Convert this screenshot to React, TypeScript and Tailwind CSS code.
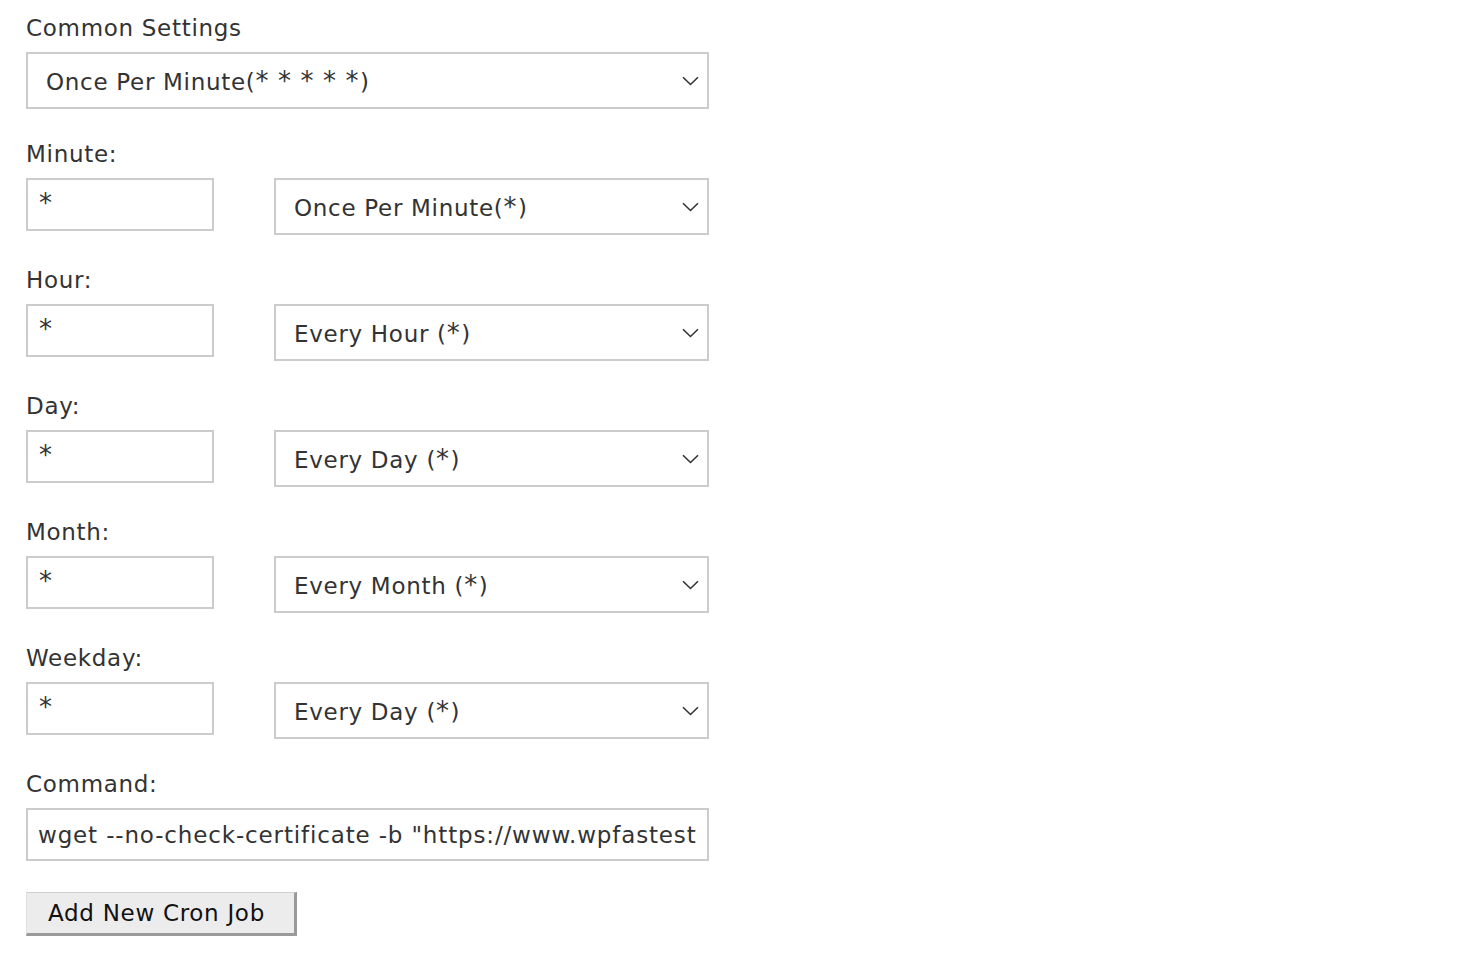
import React from "react";

const font = { fontFamily: '"DejaVu Sans", Verdana, sans-serif' };

function Stars({ text }: { text: string }) {
  const parts = text.split("*");
  return (
    <>
      {parts.map((p, i) => (
        <React.Fragment key={i}>
          {p}
          {i < parts.length - 1 && <span className="text-[26px] leading-none tracking-[1.5px]">*</span>}
        </React.Fragment>
      ))}
    </>
  );
}

function Chevron() {
  return (
    <svg width="17" height="10" viewBox="0 0 17 10" className="shrink-0">
      <path d="M1 1.2 L8.5 8.5 L16 1.2" fill="none" stroke="#333" strokeWidth="1.6" />
    </svg>
  );
}

function FakeSelect({ text, className }: { text: string; className: string }) {
  return (
    <div
      className={`h-[57px] border-2 border-[#cccccc] bg-white flex items-center justify-between pl-[18px] pr-[8px] ${className}`}
    >
      <span className="text-[23px] leading-none text-[#333333] tracking-[0.7px] whitespace-nowrap">
        <Stars text={text} />
      </span>
      <Chevron />
    </div>
  );
}

function Label({ text }: { text: string }) {
  return (
    <div className="h-[26px] leading-[26px] text-[23px] text-[#333333] tracking-[0.7px] mb-[11px]">
      {text}
    </div>
  );
}

function Row({ label, value }: { label: string; value: string }) {
  return (
    <div className="mt-[32px]">
      <Label text={label} />
      <div className="flex items-start gap-[60px]">
        <div className="w-[188px] h-[53px] border-2 border-[#cccccc] bg-white flex items-center pl-[11px] pb-[4px]">
          <span className="text-[26px] leading-none text-[#333333]">*</span>
        </div>
        <FakeSelect text={value} className="w-[435px]" />
      </div>
    </div>
  );
}

export default function App() {
  return (
    <div className="min-h-screen bg-white pl-[26px] pt-[15px]" style={font}>
      <Label text="Common Settings" />
      <FakeSelect text="Once Per Minute(* * * * *)" className="w-[683px]" />
      <Row label="Minute:" value="Once Per Minute(*)" />
      <Row label="Hour:" value="Every Hour (*)" />
      <Row label="Day:" value="Every Day (*)" />
      <Row label="Month:" value="Every Month (*)" />
      <Row label="Weekday:" value="Every Day (*)" />
      <div className="mt-[32px]">
        <Label text="Command:" />
        <div className="w-[683px] h-[53px] border-2 border-[#cccccc] bg-white flex items-center pl-[10px] pr-[10px] overflow-hidden">
          <input
            readOnly
            value={'wget --no-check-certificate -b "https://www.wpfastestcache.com/wp-cron.php"'}
            className="w-full bg-transparent outline-none text-[23px] leading-none text-[#333333] tracking-[0.85px]"
            style={font}
          />
        </div>
      </div>
      <button
        className="mt-[31px] w-[271px] h-[44px] bg-[#ececec] border-t border-l border-t-[#cfcfcf] border-l-[#e0e0e0] border-b-[3px] border-r-[3px] border-b-[#9a9a9a] border-r-[#9a9a9a] text-[23px] text-[#111111] tracking-[0.7px] flex items-center pl-[21px]"
        style={font}
      >
        Add New Cron Job
      </button>
    </div>
  );
}
